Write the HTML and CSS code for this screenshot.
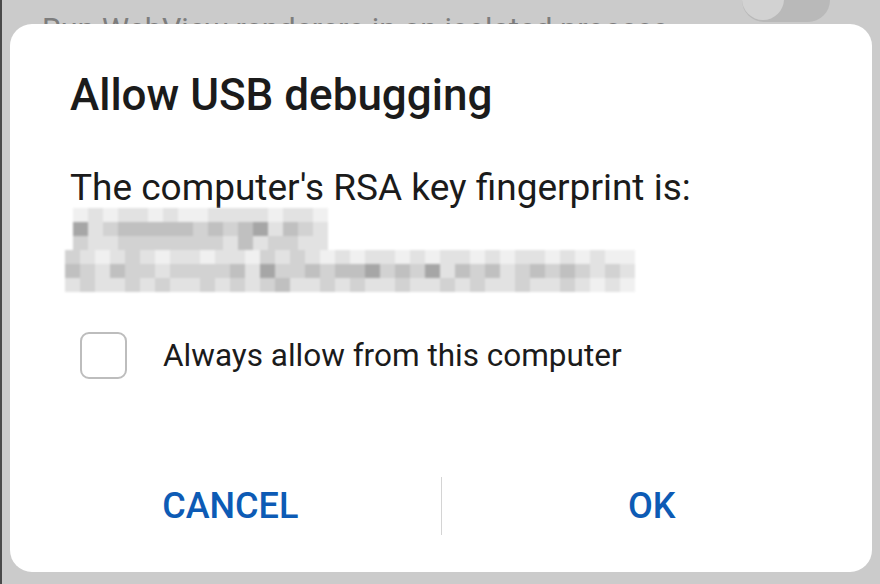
FILE: index.html
```html
<!DOCTYPE html>
<html lang="en">
<head>
  <meta charset="UTF-8">
  <title>Allow USB debugging</title>
  <link rel="stylesheet" href="styles.css">
</head>
<body>
<div class="screen">
  <div class="setting-row">
    <div class="setting-text">Run WebView renderers in an isolated process</div>
    <div class="toggle"><span class="knob"></span></div>
  </div>

  <div class="dialog">
    <h1 class="dialog-title">Allow USB debugging</h1>
    <p class="dialog-msg">The computer's RSA key fingerprint is:</p>

    <!-- fingerprint is pixelated in the screenshot -->
    <div class="mosaic">
      <div class="mosaic-line short">
        <span class="c0"></span><span class="c1"></span><span class="c0"></span><span class="c1"></span><span class="c1"></span><span class="c0"></span><span class="c1"></span><span class="c0"></span><span class="c0"></span><span class="c1"></span><span class="c1"></span><span class="c1"></span><span class="c1"></span><span class="c0"></span><span class="c1"></span><span class="c1"></span><span class="c0"></span>
      </div>
      <div class="mosaic-line short">
        <span class="c4"></span><span class="c1"></span><span class="c2"></span><span class="c3"></span><span class="c3"></span><span class="c3"></span><span class="c3"></span><span class="c3"></span><span class="c2"></span><span class="c3"></span><span class="c2"></span><span class="c3"></span><span class="c4"></span><span class="c1"></span><span class="c3"></span><span class="c2"></span><span class="c1"></span>
      </div>
      <div class="mosaic-line short">
        <span class="c2"></span><span class="c1"></span><span class="c1"></span><span class="c2"></span><span class="c2"></span><span class="c2"></span><span class="c2"></span><span class="c2"></span><span class="c2"></span><span class="c2"></span><span class="c1"></span><span class="c3"></span><span class="c1"></span><span class="c2"></span><span class="c2"></span><span class="c1"></span><span class="c1"></span>
      </div>
      <div class="mosaic-line">
        <span class="c2"></span><span class="c1"></span><span class="c0"></span><span class="c1"></span><span class="c2"></span><span class="c1"></span><span class="c0"></span><span class="c1"></span><span class="c1"></span><span class="c0"></span><span class="c1"></span><span class="c1"></span><span class="c0"></span><span class="c2"></span><span class="c1"></span><span class="c2"></span><span class="c1"></span><span class="c0"></span><span class="c1"></span><span class="c0"></span><span class="c1"></span><span class="c1"></span><span class="c0"></span><span class="c1"></span><span class="c0"></span><span class="c1"></span><span class="c1"></span><span class="c0"></span><span class="c1"></span><span class="c0"></span><span class="c1"></span><span class="c1"></span><span class="c0"></span><span class="c1"></span><span class="c0"></span><span class="c1"></span><span class="c0"></span><span class="c0"></span>
      </div>
      <div class="mosaic-line">
        <span class="c3"></span><span class="c2"></span><span class="c1"></span><span class="c3"></span><span class="c2"></span><span class="c2"></span><span class="c1"></span><span class="c2"></span><span class="c2"></span><span class="c2"></span><span class="c2"></span><span class="c3"></span><span class="c1"></span><span class="c4"></span><span class="c2"></span><span class="c2"></span><span class="c3"></span><span class="c2"></span><span class="c3"></span><span class="c3"></span><span class="c4"></span><span class="c2"></span><span class="c3"></span><span class="c2"></span><span class="c4"></span><span class="c1"></span><span class="c3"></span><span class="c2"></span><span class="c3"></span><span class="c1"></span><span class="c2"></span><span class="c3"></span><span class="c2"></span><span class="c3"></span><span class="c2"></span><span class="c1"></span><span class="c2"></span><span class="c1"></span>
      </div>
      <div class="mosaic-line">
        <span class="c1"></span><span class="c2"></span><span class="c1"></span><span class="c1"></span><span class="c2"></span><span class="c1"></span><span class="c2"></span><span class="c1"></span><span class="c1"></span><span class="c2"></span><span class="c1"></span><span class="c2"></span><span class="c1"></span><span class="c2"></span><span class="c3"></span><span class="c1"></span><span class="c1"></span><span class="c2"></span><span class="c1"></span><span class="c2"></span><span class="c1"></span><span class="c1"></span><span class="c2"></span><span class="c1"></span><span class="c1"></span><span class="c2"></span><span class="c1"></span><span class="c2"></span><span class="c1"></span><span class="c1"></span><span class="c2"></span><span class="c1"></span><span class="c1"></span><span class="c2"></span><span class="c1"></span><span class="c0"></span><span class="c1"></span><span class="c0"></span>
      </div>
    </div>

    <label class="check-row">
      <span class="checkbox"></span>
      <span class="check-label">Always allow from this computer</span>
    </label>

    <div class="actions">
      <button class="action">CANCEL</button>
      <span class="divider"></span>
      <button class="action">OK</button>
    </div>
  </div>
</div>
</body>
</html>
```

FILE: styles.css
```css
body {
    margin: 0;
    background-color: #cbcbcb;
    font-family: Roboto, "Noto Sans", Arial, sans-serif;
}

.screen {
    width: 880px;
    height: 584px;
    border-left: 2px solid #4a4a4a;
    box-sizing: border-box;
    overflow: hidden;
}

/* settings list behind the dialog */
.setting-row {
    height: 24px;
    display: flex;
    justify-content: space-between;
    overflow: hidden;
    padding: 0 50px 0 40px;
}

.setting-text {
    margin-top: 12px;
    font-size: 30.5px;
    line-height: 36px;
    color: #7d7d7d;
    white-space: nowrap;
}

.toggle {
    width: 88px;
    height: 44px;
    margin-top: -22px;
    border-radius: 22px;
    background-color: #b9b9b9;
    display: flex;
}

.knob {
    width: 42px;
    height: 42px;
    border-radius: 50%;
    background-color: #d2d2d2;
}

/* dialog */
.dialog {
    margin: 0 8px;
    height: 548px;
    background: #fff;
    border-radius: 22px;
    box-sizing: border-box;
    padding: 0 60px;
    display: flex;
    flex-direction: column;
}

.dialog-title {
    margin: 45px 0 0 0;
    font-size: 44px;
    font-weight: 500;
    line-height: 52px;
    color: #1b1b1b;
}

.dialog-msg {
    margin: 45px 0 0 0;
    font-size: 37px;
    line-height: 44px;
    color: #1b1b1b;
}

.mosaic {
    margin: -2px 0 0 -5px;
    filter: blur(1.2px);
}

.mosaic-line {
    display: flex;
    height: 14px;
}

.mosaic-line span {
    width: 15px;
    height: 14px;
    flex: none;
}

.mosaic-line.short {
    padding-left: 8px;
}

.c0 { background-color: #f0f0f0; }
.c1 { background-color: #e2e2e2; }
.c2 { background-color: #d2d2d2; }
.c3 { background-color: #c0c0c0; }
.c4 { background-color: #a6a6a6; }

.check-row {
    display: flex;
    align-items: center;
    margin-top: 40px;
    padding-left: 10px;
}

.checkbox {
    width: 43px;
    height: 43px;
    border: 2px solid #bdbdbd;
    border-radius: 9px;
}

.check-label {
    margin-left: 36px;
    font-size: 31.5px;
    color: #1b1b1b;
}

.actions {
    margin: auto -50px 37px -50px;
    display: flex;
    align-items: center;
    height: 58px;
}

.action {
    flex: 1;
    background: none;
    border: none;
    font-family: Roboto, Arial, sans-serif;
    font-size: 36px;
    font-weight: 500;
    color: #0d5bb5;
    padding: 0;
}

.divider {
    width: 1px;
    height: 58px;
    background-color: #d4d4d4;
}
```
